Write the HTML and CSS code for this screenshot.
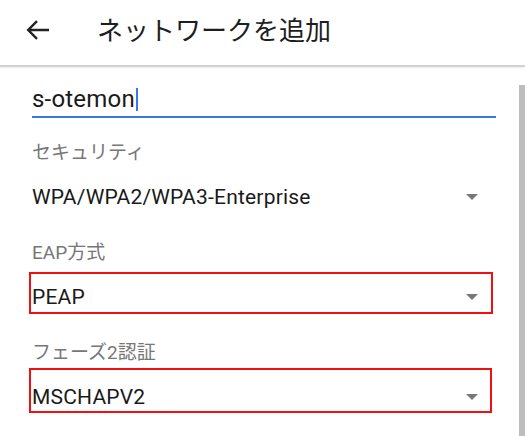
FILE: index.html
```html
<!DOCTYPE html>
<html lang="ja">
<head>
    <meta charset="UTF-8">
    <meta name="viewport" content="width=device-width, initial-scale=1.0">
    <title>ネットワークを追加</title>
    <link rel="stylesheet" href="styles.css">
</head>
<body>
    <header class="app-bar">
        <svg class="back" width="24" height="20" viewBox="0 0 24 20">
            <path d="M23 10H2.5 M11 1.2 L2.2 10 L11 18.8" fill="none" stroke="#222" stroke-width="2.4"/>
        </svg>
        <h1 class="title">ネットワークを追加</h1>
    </header>

    <main class="page">
        <div class="content">
            <div class="ssid">
                <span class="ssid-text">s-otemon</span><span class="caret"></span>
            </div>

            <div class="field">
                <div class="label">セキュリティ</div>
                <div class="select">
                    <span class="value">WPA/WPA2/WPA3-Enterprise</span>
                    <span class="arrow"></span>
                </div>
            </div>

            <div class="field">
                <div class="label">EAP方式</div>
                <div class="select">
                    <span class="value">PEAP</span>
                    <span class="arrow"></span>
                    <span class="mark mark-eap"></span>
                </div>
            </div>

            <div class="field">
                <div class="label">フェーズ2認証</div>
                <div class="select">
                    <span class="value">MSCHAPV2</span>
                    <span class="arrow"></span>
                    <span class="mark mark-phase2"></span>
                </div>
            </div>
        </div>
        <div class="scrollbar"></div>
    </main>
</body>
</html>
```

FILE: styles.css
```css
body {
    margin: 0;
    background: #fff;
    color: #212121;
    font-family: Roboto, "Noto Sans CJK JP", sans-serif;
    overflow: hidden;
}
.app-bar {
    box-sizing: border-box;
    height: 67px;
    padding: 0 0 7px 26px;
    display: flex;
    align-items: center;
    border-bottom: 2px solid #d2d2d2;
    box-shadow: 0 1px 2px rgba(0, 0, 0, 0.08);
}
.back {
    display: block;
    margin-top: 1px;
}
.title {
    margin: 0 0 0 47px;
    font-family: "Noto Sans CJK JP", sans-serif;
    font-size: 26px;
    font-weight: normal;
    line-height: 34px;
    color: #1e1e1e;
}
.page {
    display: flex;
    height: 369px;
}
.content {
    flex: 1;
    padding: 0 23px 0 32px;
}
.scrollbar {
    width: 6px;
    margin-top: 18px;
    background: #bdbdbd;
}
.ssid {
    margin-top: 17px;
    padding-bottom: 2px;
    border-bottom: 2px solid #3b78e7;
    font-size: 24px;
    letter-spacing: 0.2px;
    line-height: 30px;
    color: #1a1a1a;
    display: flex;
    align-items: center;
}
.caret {
    display: inline-block;
    width: 2px;
    height: 23px;
    margin-left: 1px;
    background: #3b78e7;
}
.field {
    margin-top: 23px;
}
.field + .field {
    margin-top: 24px;
}
.label {
    font-size: 19px;
    line-height: 24px;
    color: #777;
    margin-bottom: 12px;
}
.select {
    position: relative;
    height: 40px;
    display: flex;
    align-items: center;
    justify-content: space-between;
}
.value {
    font-size: 21px;
    letter-spacing: 0.2px;
    color: #1a1a1a;
}
.arrow {
    width: 0;
    height: 0;
    margin-right: 18px;
    border-left: 6.5px solid transparent;
    border-right: 6.5px solid transparent;
    border-top: 6.5px solid #777;
}
.mark {
    position: absolute;
    left: -3px;
    border: 2px solid #f01010;
    box-sizing: border-box;
}
.mark-eap {
    top: -5px;
    width: 464px;
    height: 42px;
}
.mark-phase2 {
    top: -9px;
    width: 463px;
    height: 45px;
}
```
